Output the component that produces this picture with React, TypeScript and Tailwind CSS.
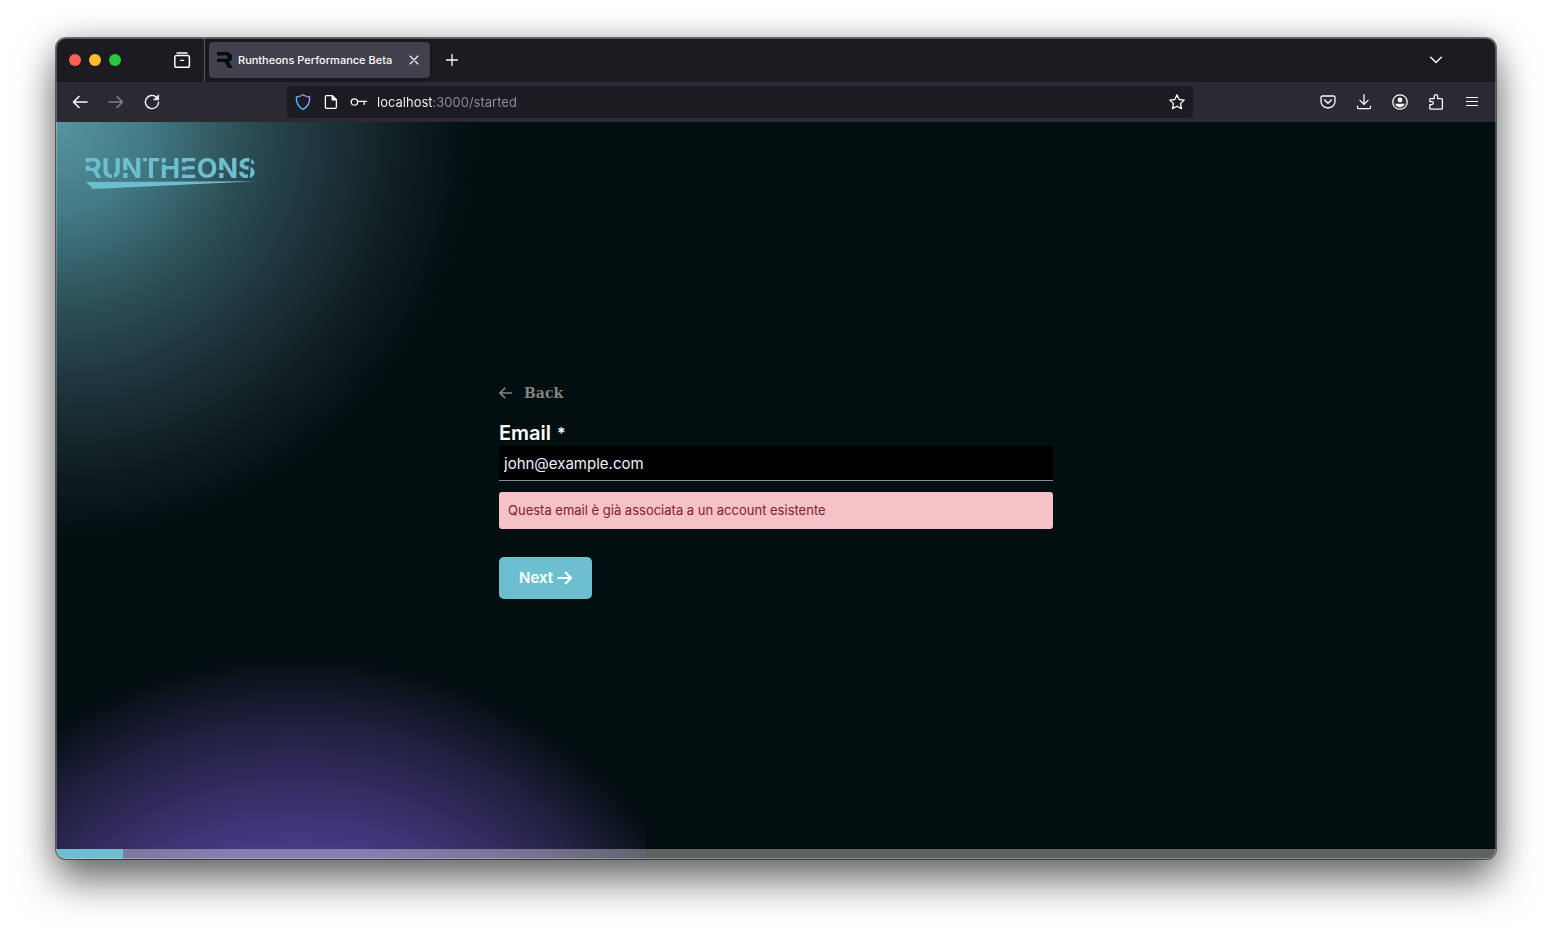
import React, { useState } from 'react';
import { clsx } from 'clsx';

type IconButtonProps = {
  label: string;
  className?: string;
  children: React.ReactNode;
};

const IconButton = ({ label, className, children }: IconButtonProps) => (
  <button
    type="button"
    aria-label={label}
    className={clsx('flex h-8 shrink-0 items-center justify-center text-[#fbfbfe]', className)}
  >
    <svg
      width="16"
      height="16"
      viewBox="0 0 16 16"
      fill="none"
      stroke="currentColor"
      strokeWidth="1.3"
      strokeLinecap="round"
      strokeLinejoin="round"
      aria-hidden="true"
      className="overflow-visible"
    >
      {children}
    </svg>
  </button>
);

const TabBar = () => (
  <div className="flex h-11 shrink-0 items-center bg-[#1c1b22] text-[#fbfbfe]">
    <div className="flex w-[148px] shrink-0 items-center gap-2 pl-[13px]">
      <button type="button" aria-label="Close window" className="size-3 rounded-full bg-[#ff5f57]" />
      <button type="button" aria-label="Minimize window" className="size-3 rounded-full bg-[#febc2e]" />
      <button type="button" aria-label="Zoom window" className="size-3 rounded-full bg-[#28c840]" />
      <IconButton label="View recent browsing" className="ml-auto w-11">
        <path d="M3 .9h10" strokeWidth="1.5" />
        <rect x=".8" y="3.6" width="14.6" height="11.6" rx="1.8" strokeWidth="1.5" />
        <path d="M6.6 8.4h3" strokeWidth="1.3" />
      </IconButton>
    </div>
    <div className="h-full w-px bg-[#5a595f]" />
    <div className="ml-1 flex h-9 w-[221px] shrink-0 items-center rounded bg-[#42414d] pl-2 shadow-[0_0_4px_rgba(0,0,0,0.5)]">
      <svg width="16" height="16" viewBox="0 0 16 16" fill="#050f12" aria-hidden="true">
        <path d="M0 0h11.5L15 3v4.6l-3 2.2 3.8 6.2h-4.6L7.4 10H0V6.8h10.6V3.4H0z" />
      </svg>
      <span className="ml-[5px] text-[11px] font-medium whitespace-nowrap">Runtheons Performance Beta</span>
      <IconButton label="Close tab" className="ml-auto w-8">
        <path d="M4 4l8 8M12 4l-8 8" strokeWidth="1.1" />
      </IconButton>
    </div>
    <IconButton label="New tab" className="ml-1 w-[35px]">
      <path d="M8 2.5v11M2.5 8h11" />
    </IconButton>
    <IconButton label="List all tabs" className="mr-[42px] ml-auto w-9">
      <path d="M2.7 5.2L8 10.4l5.3-5.2" strokeWidth="1.4" />
    </IconButton>
  </div>
);

const AddressBar = () => (
  <div className="mx-[117px] flex h-8 min-w-0 flex-1 items-center rounded bg-[#1c1b22] pl-0.5">
    <IconButton label="Tracking protection" className="w-7">
      <defs>
        <linearGradient id="shield" x1="0" y1="1" x2="1" y2="0">
          <stop offset="0" stopColor="#00ddff" />
          <stop offset="0.5" stopColor="#6fa8ff" />
          <stop offset="1" stopColor="#b98cff" />
        </linearGradient>
      </defs>
      <path
        d="M8 .8c2 1.4 4.2 2 6.6 2.2.4 5.4-1.6 9.6-6.6 12.3C3 12.6 1 8.4 1.4 3 3.8 2.8 6 2.2 8 .8z"
        stroke="url(#shield)"
        strokeWidth="1.4"
      />
    </IconButton>
    <IconButton label="Site information" className="w-7">
      <path d="M3.4 1.7h5.8l4.2 4.1v7.3c0 .8-.4 1.2-1.2 1.2H3.6c-.8 0-1.2-.4-1.2-1.2V2.9c0-.8.4-1.2 1-1.2z" />
      <path d="M9.2 1.7v4.1h4.2z" fill="currentColor" />
    </IconButton>
    <IconButton label="Saved logins" className="w-7">
      <circle cx="3.4" cy="8" r="3.2" />
      <path d="M6.6 7.4h9M13.2 7.4v3" />
    </IconButton>
    <input
      type="text"
      aria-label="Address"
      defaultValue="localhost:3000/started"
      className="ml-1 h-8 min-w-0 flex-1 bg-[linear-gradient(to_right,#fbfbfe_56px,#8f8e96_56px)] bg-clip-text text-[13px] text-transparent outline-none"
    />
    <IconButton label="Bookmark this page" className="w-8">
      <path d="M8 .9l2.2 4.6 5 .6-3.7 3.5 1 5L8 12.2l-4.500 2.400 1-5L.8 6.100l5-.6z" />
    </IconButton>
  </div>
);

const ToolBar = () => (
  <div className="flex h-10 shrink-0 items-center bg-[#2b2a33] px-1.5">
    <IconButton label="Go back" className="w-9">
      <path d="M15 8H1.5M7 2.5L1.5 8 7 13.5" strokeWidth="1.6" />
    </IconButton>
    <IconButton label="Go forward" className="w-9 opacity-40">
      <path d="M1 8h13.5M9 2.5L14.5 8 9 13.5" strokeWidth="1.6" />
    </IconButton>
    <IconButton label="Reload" className="w-9">
      <path d="M14.6 8.2A6.6 6.6 0 1 1 12.4 3.1" strokeWidth="1.4" />
      <path d="M14.6 1.2v4.6H10z" fill="currentColor" strokeWidth=".8" />
    </IconButton>
    <AddressBar />
    <IconButton label="Save to Pocket" className="w-9">
      <path d="M2.3 2h11.4c.8 0 1.3.5 1.3 1.3v4.2a7 6.5 0 0 1-14 0V3.3C1 2.5 1.5 2 2.3 2z" />
      <path d="M4.7 6L8 9.2 11.3 6" strokeWidth="1.5" />
    </IconButton>
    <IconButton label="Downloads" className="w-9">
      <path d="M8 .6v9.8M3.9 6.4L8 10.4l4.1-4M1.5 12.2v1.2c0 .8.5 1.3 1.3 1.3h10.4c.8 0 1.3-.5 1.3-1.3v-1.2" />
    </IconButton>
    <IconButton label="Account" className="w-9">
      <circle cx="8" cy="8" r="7.2" />
      <circle cx="8" cy="5.9" r="2.4" fill="currentColor" stroke="none" />
      <path d="M3.2 9.8h9.6c-.6 2.2-2.4 3.4-4.8 3.4s-4.2-1.2-4.8-3.4z" fill="currentColor" stroke="none" />
    </IconButton>
    <IconButton label="Extensions" className="w-9">
      <path d="M2.8 15.2c-.7 0-1-.4-1-1v-3.600h2a1.500 1.500 0 0 0 0-3H1.800V5.600c0-.7.4-1 1-1h3.400V2.300a1.700 1.700 0 0 1 3.400 0v2.300h3.800c.7 0 1 .4 1 1v8.600c0 .7-.4 1-1 1z" />
    </IconButton>
    <IconButton label="Open application menu" className="w-9">
      <path d="M2.5 3.5h11M2.5 7.5h11M2.5 11.5h11" strokeWidth="1.2" />
    </IconButton>
  </div>
);

const Logo = () => (
  <a href="#home" aria-label="Runtheons" className="mt-9 ml-[29px] self-start justify-self-start text-[#6dbfd0] [grid-area:1/1]">
    <svg width="174" height="32" viewBox="0 0 174 32" fill="currentColor" className="overflow-visible">
      {/* thin cuts that turn the letters into a stencil */}
      <mask id="stencil" maskUnits="userSpaceOnUse" x="0" y="0" width="180" height="32">
        <rect width="180" height="32" fill="white" />
        <g fill="black">
          <rect x="0" y="4.500" width="6" height="3" />
          <rect x="0" y="13" width="6" height="9" />
          <rect x="27" y="0" width="2" height="22" />
          <rect x="38" y="12" width="6" height="3" />
          <rect x="62" y="0" width="2" height="5" />
          <rect x="77" y="4.500" width="6" height="2" />
          <rect x="97" y="4.500" width="6" height="4" />
          <rect x="97" y="12.500" width="6" height="4" />
          <rect x="134" y="12" width="6" height="3" />
          <path d="M164.500 0h2l-2 22h-2z" />
        </g>
      </mask>
      <text x="-1" y="20" fontSize="27" fontWeight="700" mask="url(#stencil)">RUNTHEONS</text>
      <path d="M1 24L173 23.200 8 31z" />
    </svg>
  </a>
);

const EmailForm = () => {
  const [email, setEmail] = useState('john@example.com');

  return (
    <form
      onSubmit={(e) => e.preventDefault()}
      className="flex w-full max-w-[554px] flex-col items-start place-self-center [grid-area:1/1]"
    >
      <button type="button" className="flex h-[22px] items-center gap-3 text-[#828585]">
        <svg width="13" height="12" viewBox="0 0 13 12" fill="none" stroke="currentColor" strokeWidth="1.6" aria-hidden="true">
          <path d="M13 6H1M6.3.7L1 6l5.3 5.3" />
        </svg>
        <span className="font-['DejaVu_Serif',serif] text-[14px] font-bold">Back</span>
      </button>
      <label htmlFor="email" className="mt-4 flex h-[26px] items-center gap-1.5 text-[20px] font-semibold text-white">
        Email
        <span aria-hidden="true" className="text-[16px] leading-[26px]">*</span>
      </label>
      <input
        id="email"
        type="email"
        required
        value={email}
        onChange={(e) => setEmail(e.target.value)}
        className="h-[35px] w-full border-b border-[#8b8f8f] bg-black px-[5px] text-[15px] text-[#f3effb] outline-none"
      />
      <p role="alert" className="mt-[11px] w-full rounded-[3px] bg-[#f5c2c7] px-[9px] py-2 text-[13px] leading-[21px] text-[#842029]">
        Questa email è già associata a un account esistente
      </p>
      <button
        type="submit"
        className="mt-7 flex h-[42px] items-center gap-1 rounded-[5px] bg-[#6dbfd0] px-5 text-[15px] font-semibold text-white"
      >
        Next
        <svg width="15" height="14" viewBox="0 0 15 14" fill="none" stroke="currentColor" strokeWidth="2" aria-hidden="true">
          <path d="M.5 7H13.5M8 1l6 6-6 6" />
        </svg>
      </button>
    </form>
  );
};

const StartedPage = () => (
  <main className="grid flex-1 bg-[#020e0f] bg-[radial-gradient(circle_at_0_0,#56949f_0,#437b86_90px,#2b4d54_190px,#1c3238_275px,#0e1c21_355px,transparent_425px),radial-gradient(circle_at_240px_986px,#5746a4_0,#473a84_259px,#2f2a5a_338px,#1c1d38_395px,#0e1420_428px,transparent_454px)] bg-[size:100%_100%,590px_100%] bg-no-repeat">
    <Logo />
    <EmailForm />
    <div
      role="progressbar"
      aria-label="Registration progress"
      aria-valuenow={5}
      aria-valuemin={0}
      aria-valuemax={100}
      className="h-2.5 self-end bg-white/35 [grid-area:1/1]"
    >
      <div className="h-full w-[67px] bg-[#6dbfd0]" />
    </div>
  </main>
);

export default function App() {
  return (
    <div className="flex min-h-screen bg-white px-14 pt-[38px] pb-[74px] font-['Inter',sans-serif]">
      <div className="relative flex min-w-0 flex-1 flex-col overflow-hidden rounded-[10px] shadow-[0_0_0_1px_rgba(0,0,0,0.5),0_22px_40px_rgba(0,0,0,0.55),0_0_30px_rgba(0,0,0,0.2)]">
        <TabBar />
        <ToolBar />
        <StartedPage />
        <div className="pointer-events-none absolute inset-0 rounded-[10px] border border-white/25" />
      </div>
    </div>
  );
}
